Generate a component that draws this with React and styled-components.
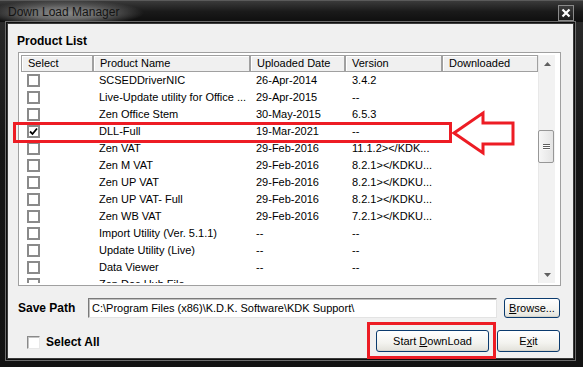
import React from "react";
import styled, { createGlobalStyle } from "styled-components";

const GlobalStyle = createGlobalStyle`
  html, body {
    margin: 0;
    padding: 0;
    background: #000;
  }
  body {
    font-family: "Liberation Sans", Arial, sans-serif;
    font-size: 11px;
    color: #000;
  }
`;

const products = [
  { name: "SCSEDDriverNIC", date: "26-Apr-2014", version: "3.4.2" },
  { name: "Live-Update utility for Office ...", date: "29-Apr-2015", version: "--" },
  { name: "Zen Office Stem", date: "30-May-2015", version: "6.5.3" },
  { name: "DLL-Full", date: "19-Mar-2021", version: "--", checked: true },
  { name: "Zen VAT", date: "29-Feb-2016", version: "11.1.2></KDK..." },
  { name: "Zen M VAT", date: "29-Feb-2016", version: "8.2.1></KDKU..." },
  { name: "Zen UP VAT", date: "29-Feb-2016", version: "8.2.1></KDKU..." },
  { name: "Zen UP VAT- Full", date: "29-Feb-2016", version: "8.2.1></KDKU..." },
  { name: "Zen WB VAT", date: "29-Feb-2016", version: "7.2.1></KDKU..." },
  { name: "Import Utility (Ver. 5.1.1)", date: "--", version: "--" },
  { name: "Update Utility (Live)", date: "--", version: "--" },
  { name: "Data Viewer", date: "--", version: "--" },
  { name: "Zen Doc Hub File", date: "", version: "" },
];

const columns = ["Select", "Product Name", "Uploaded Date", "Version", "Downloaded"];

function App() {
  return (
    <>
      <GlobalStyle />
      <Window>
        <TitleBar>
          <Title>Down Load Manager</Title>
          <CloseButton>
            <svg width="10" height="10" viewBox="0 0 10 10">
              <path d="M1.5 1.5 L8.5 8.5 M8.5 1.5 L1.5 8.5" stroke="#fff" strokeWidth="2.2" />
            </svg>
          </CloseButton>
        </TitleBar>
        <Client>
          <GroupLabel>Product List</GroupLabel>
          <ListFrame>
            <Table>
              <HeaderRow>
                {columns.map((c) => (
                  <HeaderCell key={c}>{c}</HeaderCell>
                ))}
              </HeaderRow>
              {products.map((p) => (
                <Row key={p.name}>
                  <Cell>
                    <RowCheck>
                      {p.checked && (
                        <svg width="9" height="9" viewBox="0 0 9 9">
                          <path d="M1 4.5 L3.5 7 L8 1.5" stroke="#000" strokeWidth="1.8" fill="none" />
                        </svg>
                      )}
                    </RowCheck>
                  </Cell>
                  <Cell>{p.name}</Cell>
                  <Cell>{p.date}</Cell>
                  <Cell $pad={7}>{p.version}</Cell>
                  <Cell></Cell>
                </Row>
              ))}
            </Table>
            <ScrollBar>
              <ScrollButton>
                <svg width="7" height="4" viewBox="0 0 7 4">
                  <path d="M0 4 L3.5 0 L7 4 Z" fill="#606060" />
                </svg>
              </ScrollButton>
              <Track>
                <Thumb>
                  <Grip />
                  <Grip />
                  <Grip />
                </Thumb>
              </Track>
              <ScrollButton>
                <svg width="7" height="4" viewBox="0 0 7 4">
                  <path d="M0 0 L7 0 L3.5 4 Z" fill="#606060" />
                </svg>
              </ScrollButton>
            </ScrollBar>
          </ListFrame>
          <PathRow>
            <FieldLabel>Save Path</FieldLabel>
            <PathInput>C:\Program Files (x86)\K.D.K. Software\KDK Support\</PathInput>
            <Button $width={56}>
              <span>
                <u>B</u>rowse...
              </span>
            </Button>
          </PathRow>
          <BottomRow>
            <SelectAll>
              <PlainCheck />
              <FieldLabel as="span">Select All</FieldLabel>
            </SelectAll>
            <Actions>
              <Button $width={113} $height={22}>
                <span>
                  Start <u>D</u>ownLoad
                </span>
              </Button>
              <Button $width={63} $height={22}>
                <span>
                  E<u>x</u>it
                </span>
              </Button>
            </Actions>
          </BottomRow>
        </Client>

        <Highlight style={{ left: 13, top: 122, width: 439, height: 21 }} />
        <Highlight style={{ left: 367, top: 322, width: 129, height: 37 }} />
        <Arrow width="64" height="48" viewBox="0 0 64 48">
          <path
            d="M2 23 L31 3 L31 13 L61 13 L61 34 L31 34 L31 43 Z"
            fill="none"
            stroke="#ed1c24"
            strokeWidth="3"
          />
        </Arrow>
      </Window>
    </>
  );
}

export default App;

const Window = styled.div`
  position: relative;
  width: 583px;
  height: 367px;
  display: flex;
  flex-direction: column;
  background: linear-gradient(to bottom, #2c2c2c, #161616 40%, #121212);
  overflow: hidden;
`;

const TitleBar = styled.div`
  height: 22px;
  flex: none;
  display: flex;
  align-items: center;
  padding-left: 8px;
  background:
    radial-gradient(ellipse 80px 13px at 64px 12px, #8a8a8a 0%, #6a6a6a 45%, rgba(60, 60, 60, 0) 100%),
    linear-gradient(to bottom, #3a3a3a, #1a1a1a 50%, #0e0e0e);
  border-top: 1px solid #5a5a5a;
  box-sizing: border-box;
`;

const Title = styled.span`
  font-family: "Liberation Sans", Arial, sans-serif;
  font-size: 12px;
  color: #141414;
`;

const CloseButton = styled.div`
  margin-left: auto;
  margin-right: 9px;
  align-self: flex-start;
  margin-top: 4px;
  width: 16px;
  height: 16px;
  box-sizing: border-box;
  border: 1px solid #8a8a8a;
  background: linear-gradient(to bottom, #3c3c3c, #1c1c1c);
  display: flex;
  align-items: center;
  justify-content: center;
`;

const Client = styled.div`
  flex: 1;
  margin: 2px 10px 9px 8px;
  padding: 10px 12px 0 10px;
  background: #f0f0f0;
  display: flex;
  flex-direction: column;
  box-shadow: 0 0 0 1px #3a3a3a, 0 0 0 2px #0d0d0d, 0 0 0 3px #6b6b6b;
`;

const GroupLabel = styled.div`
  font-weight: bold;
  font-size: 12px;
  line-height: 14px;
  margin-left: -1px;
`;

const ListFrame = styled.div`
  margin-top: 4px;
  width: 543px;
  height: 234px;
  box-sizing: border-box;
  border: 1px solid #a0a0a0;
  padding: 2px 5px 2px 2px;
  background: #fff;
  display: flex;
`;

const Table = styled.div`
  width: 517px;
  overflow: hidden;
`;

const grid = `
  display: grid;
  grid-template-columns: 72px 157px 95px 97px 96px;
`;

const HeaderRow = styled.div`
  ${grid}
  height: 17px;
`;

const HeaderCell = styled.div`
  box-sizing: border-box;
  height: 17px;
  border: 1px solid #a0a0a0;
  box-shadow: inset 1px 1px 0 #fff;
  background: #f0f0f0;
  padding-left: 6px;
  line-height: 15px;
  white-space: nowrap;
`;

const Row = styled.div`
  ${grid}
  height: 17px;
  align-items: center;
`;

const Cell = styled.div`
  padding-left: ${(p) => p.$pad ?? 6}px;
  white-space: nowrap;
  overflow: hidden;
  line-height: 17px;
  display: flex;
  align-items: center;
`;

const RowCheck = styled.div`
  width: 13px;
  height: 13px;
  box-sizing: border-box;
  border: 2px solid #8a8a8a;
  background: #fff;
  display: flex;
  align-items: center;
  justify-content: center;
`;

const ScrollBar = styled.div`
  width: 17px;
  display: flex;
  flex-direction: column;
  background: #f2f2f2;
  border-left: 1px solid #e8e8e8;
  box-sizing: border-box;
`;

const ScrollButton = styled.div`
  height: 17px;
  flex: none;
  display: flex;
  align-items: center;
  justify-content: center;
`;

const Track = styled.div`
  flex: 1;
  padding-top: 58px;
`;

const Thumb = styled.div`
  width: 16px;
  height: 33px;
  box-sizing: border-box;
  margin-left: -1px;
  border: 1px solid #979797;
  border-radius: 2px;
  background: linear-gradient(to right, #f6f6f6, #e4e4e4);
  display: flex;
  flex-direction: column;
  align-items: center;
  justify-content: center;
  gap: 1px;
`;

const Grip = styled.div`
  width: 7px;
  height: 1px;
  background: #5e5e5e;
  box-shadow: 0 1px 0 #fff;
`;

const PathRow = styled.div`
  margin-top: 12px;
  height: 20px;
  display: flex;
  align-items: center;
`;

const FieldLabel = styled.div`
  font-weight: bold;
  font-size: 12px;
  width: 70px;
  flex: none;
`;

const PathInput = styled.div`
  width: 409px;
  height: 20px;
  box-sizing: border-box;
  border: 1px solid;
  border-color: #7a7a7a #e3e3e3 #e3e3e3 #7a7a7a;
  box-shadow: inset 1px 1px 0 #c0c0c0;
  background: #fff;
  padding-left: 3px;
  line-height: 18px;
  white-space: nowrap;
  overflow: hidden;
`;

const Button = styled.div`
  margin-left: 7px;
  width: ${(p) => p.$width}px;
  height: ${(p) => p.$height ?? 20}px;
  box-sizing: border-box;
  border: 1px solid #0b3b6e;
  border-radius: 3px;
  background: linear-gradient(to bottom, #ffffff, #f3f3ef 60%, #e2e1da);
  box-shadow: inset 0 -1px 0 #d6d4cb;
  display: flex;
  align-items: center;
  justify-content: center;
  flex: none;
  white-space: pre;
  u {
    text-decoration: underline;
  }
`;

const BottomRow = styled.div`
  margin-top: 12px;
  height: 22px;
  display: flex;
  align-items: center;
`;

const SelectAll = styled.label`
  display: flex;
  align-items: center;
  gap: 6px;
  padding-left: 9px;
  padding-top: 2px;
`;

const PlainCheck = styled.span`
  width: 13px;
  height: 13px;
  box-sizing: border-box;
  border: 1px solid;
  border-color: #8a8a8a #e8e8e8 #e8e8e8 #8a8a8a;
  box-shadow: inset 1px 1px 0 #c4c4c4;
  background: #fff;
`;

const Actions = styled.div`
  margin-left: auto;
  margin-right: 1px;
  display: flex;
  gap: 1px;
`;

const Highlight = styled.div`
  position: absolute;
  box-sizing: border-box;
  border: 3px solid #ed1c24;
  pointer-events: none;
`;

const Arrow = styled.svg`
  position: absolute;
  left: 452px;
  top: 110px;
`;
